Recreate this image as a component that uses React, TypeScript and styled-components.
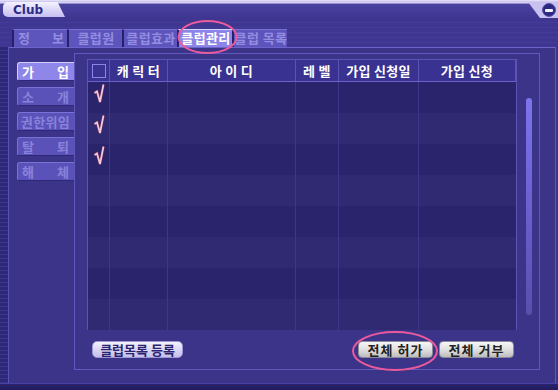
import styled, { createGlobalStyle } from "styled-components";

const GlobalStyle = createGlobalStyle`
	html, body {
		margin: 0;
		padding: 0;
		background: #3c3489;
	}
	* {
		box-sizing: border-box;
	}
`;

const KR = `"Noto Sans CJK KR", "Noto Sans", sans-serif`;

const Window = styled.div`
	position: relative;
	width: 558px;
	height: 390px;
	display: flex;
	flex-direction: column;
	background: #3c3489;
	font-family: ${KR};
	overflow: hidden;
`;

const TitleBar = styled.div`
	position: relative;
	height: 18px;
	display: flex;
	align-items: flex-start;
	justify-content: space-between;
	background: linear-gradient(
		180deg,
		#e8e4fa 0px,
		#c8c0ee 2px,
		#e4e0f8 3px,
		#4a42a0 4px,
		#3e3690 18px
	);
`;

const TitleTab = styled.div`
	margin: 2px 0 0 3px;
	width: 62px;
	height: 15px;
	padding-left: 10px;
	display: flex;
	align-items: center;
	background: linear-gradient(180deg, #f4f2fe, #c6bef0);
	border-radius: 5px 0 0 5px;
	clip-path: polygon(0 0, 88% 0, 100% 100%, 0 100%);
	font-family: "DejaVu Sans", sans-serif;
	font-weight: bold;
	font-size: 12px;
	color: #2e2a86;
`;

const CloseNotch = styled.div`
	margin-top: 2px;
	width: 30px;
	height: 16px;
	display: flex;
	align-items: center;
	justify-content: flex-end;
	padding-right: 2px;
	background: #c8c0ee;
	clip-path: polygon(0 0, 100% 0, 100% 100%, 40% 100%);
`;

const CloseButton = styled.div`
	width: 14px;
	height: 14px;
	border-radius: 50%;
	background: #2c2880;
	border: 1px solid #5a54b0;
	display: flex;
	align-items: center;
	justify-content: center;
	&::after {
		content: "";
		width: 8px;
		height: 3px;
		border-radius: 1px;
		background: #f2f0ff;
	}
`;

const TabBar = styled.div`
	height: 29px;
	padding: 11px 0 0 12px;
	display: flex;
	background: repeating-linear-gradient(
		180deg,
		#3e3690 0px,
		#3e3690 4px,
		#4a42a2 5px
	);
`;

const Tab = styled.div<{ $active?: boolean; $spread: boolean }>`
	width: 55px;
	height: 18px;
	border-left: 2px solid #27216c;
	border-top: 1px solid ${(p) => (p.$active ? "#d8d2ff" : "#7870d0")};
	background: ${(p) => (p.$active ? "#8c84e8" : "#5d55bb")};
	color: ${(p) => (p.$active ? "#ffffff" : "#948de2")};
	font-size: 13px;
	font-weight: bold;
	line-height: 16px;
	display: flex;
	justify-content: ${(p) => (p.$spread ? "space-between" : "center")};
	padding: 0 3px 0 4px;
	white-space: nowrap;
	letter-spacing: ${(p) => (p.$spread ? "0" : "0.4px")};
`;

const Frame = styled.div`
	flex: 1;
	display: flex;
`;

const Ruler = styled.div`
	width: 9px;
	background: repeating-linear-gradient(
		180deg,
		#2e2878 0px,
		#2e2878 3px,
		#4c44a4 4px
	);
	border-right: 1px solid #5a52b4;
`;

const FrameBody = styled.div`
	flex: 1;
	margin-right: 2px;
	display: flex;
	border-top: 1px solid #6c64c8;
	border-right: 1px solid #6058bc;
	background: #3c3489;
`;

const SideMenu = styled.div`
	width: 65px;
	padding: 14px 0 0 8px;
	display: flex;
	flex-direction: column;
	gap: 6px;
`;

const SideButton = styled.div<{ $active?: boolean; $spread: boolean }>`
	width: 57px;
	height: 19px;
	border-radius: 3px 0 0 3px;
	border-top: 1px solid ${(p) => (p.$active ? "#d4ceff" : "#7a72d4")};
	border-left: 1px solid ${(p) => (p.$active ? "#d4ceff" : "#7a72d4")};
	border-bottom: 1px solid #2e2878;
	background: ${(p) => (p.$active ? "#8e86e8" : "#5a52b8")};
	color: ${(p) => (p.$active ? "#ffffff" : "#8a82da")};
	font-size: 13px;
	font-weight: bold;
	line-height: 17px;
	display: flex;
	justify-content: ${(p) => (p.$spread ? "space-between" : "center")};
	padding: 0 5px 0 4px;
	white-space: nowrap;
	letter-spacing: ${(p) => (p.$spread ? "0" : "0.4px")};
`;

const Panel = styled.div`
	margin-top: 5px;
	width: 466px;
	height: 317px;
	border: 1px solid #6058bc;
	padding: 5px 0 0 12px;
	display: flex;
	flex-direction: column;
`;

const TableRow = styled.div`
	display: flex;
`;

const Table = styled.div`
	width: 430px;
	height: 271px;
	border: 1px solid #5c54b4;
	display: grid;
	grid-template-columns: 22px 58px 128px 43px 80px 97px;
	grid-template-rows: 22px repeat(8, 31px);
`;

const HeadCell = styled.div`
	background: #3a3290;
	border-bottom: 1px solid #6a62c8;
	border-right: 1px solid #5c54b4;
	color: #ffffff;
	font-size: 13px;
	font-weight: bold;
	display: flex;
	align-items: center;
	justify-content: center;
	letter-spacing: 0.3px;
	white-space: nowrap;
	&:last-child {
		border-right: none;
	}
`;

const CheckBox = styled.div`
	width: 14px;
	height: 14px;
	border: 1px solid #8c84e8;
`;

const Cell = styled.div<{ $odd: boolean; $last?: boolean }>`
	background: ${(p) => (p.$odd ? "#29246c" : "#302a72")};
	border-right: ${(p) => (p.$last ? "none" : "1px solid #3e3788")};
	display: flex;
	align-items: center;
	justify-content: center;
`;

const CheckIcon = styled.svg`
	margin-top: -7px;
	margin-left: 2px;
`;

const ScrollTrack = styled.div`
	width: 22px;
	padding: 39px 0 0 9px;
`;

const ScrollThumb = styled.div`
	width: 6px;
	height: 217px;
	border-radius: 3px;
	background: linear-gradient(180deg, #7c74ec 0%, #6a60d0 50%, #5a4eac 100%);
`;

const Footer = styled.div`
	margin-top: 11px;
	width: 430px;
	display: flex;
	align-items: center;
	padding: 0 3px 0 5px;
`;

const ListButton = styled.div`
	width: 91px;
	height: 17px;
	border-radius: 5px;
	background: linear-gradient(180deg, #f4f2fe 0%, #d6d2f2 60%, #c6c0ea 100%);
	border: 1px solid #9c96d8;
	color: #2a2470;
	font-size: 13px;
	font-weight: bold;
	line-height: 15px;
	text-align: center;
	white-space: nowrap;
`;

const Spacer = styled.div`
	flex: 1;
`;

const GrayButton = styled.div`
	width: 75px;
	height: 17px;
	margin-left: 6px;
	border-radius: 4px;
	background: linear-gradient(180deg, #f6f6f6 0%, #dedede 55%, #bcbcbc 100%);
	border: 1px solid #8a8a9a;
	color: #222222;
	font-size: 13px;
	font-weight: bold;
	line-height: 15px;
	text-align: center;
	letter-spacing: 1px;
	white-space: nowrap;
`;

const BottomBand = styled.div`
	height: 7px;
	background: linear-gradient(180deg, #2a2470, #211c5c);
	border-top: 1px solid #4a42a0;
`;

const Marks = styled.svg`
	position: absolute;
	left: 0;
	top: 0;
	pointer-events: none;
`;

const tabs = [
	{ label: ["정", "보"] },
	{ label: ["클럽원"] },
	{ label: ["클럽효과"] },
	{ label: ["클럽관리"], active: true },
	{ label: ["클럽 목록"] },
];

const sideItems = [
	{ label: ["가", "입"], active: true },
	{ label: ["소", "개"] },
	{ label: ["권한위임"] },
	{ label: ["탈", "퇴"] },
	{ label: ["해", "체"] },
];

const headers = ["캐 릭 터", "아 이 디", "레  벨", "가입 신청일", "가입 신청"];

const checkedRows = [0, 1, 2];

function Check() {
	return (
		<CheckIcon width="14" height="24" viewBox="0 0 14 24">
			<polyline
				points="1.5,11 4,9.5 7,20 10.5,2.5"
				fill="none"
				stroke="#5a2a58"
				strokeWidth="3.2"
				strokeLinejoin="miter"
			/>
			<polyline
				points="1.5,11 4,9.5 7,20 10.5,2.5"
				fill="none"
				stroke="#f4c6de"
				strokeWidth="1.8"
				strokeLinejoin="miter"
			/>
		</CheckIcon>
	);
}

function App() {
	const rows = Array.from({ length: 8 }, (_, i) => i);

	return (
		<Window>
			<GlobalStyle />
			<TitleBar>
				<TitleTab>Club</TitleTab>
				<CloseNotch>
					<CloseButton />
				</CloseNotch>
			</TitleBar>
			<TabBar>
				{tabs.map((t, i) => (
					<Tab key={i} $active={t.active} $spread={t.label.length > 1}>
						{t.label.map((c) => (
							<span key={c}>{c}</span>
						))}
					</Tab>
				))}
			</TabBar>
			<Frame>
				<Ruler />
				<FrameBody>
					<SideMenu>
						{sideItems.map((s, i) => (
							<SideButton key={i} $active={s.active} $spread={s.label.length > 1}>
								{s.label.map((c) => (
									<span key={c}>{c}</span>
								))}
							</SideButton>
						))}
					</SideMenu>
					<Panel>
						<TableRow>
							<Table>
								<HeadCell>
									<CheckBox />
								</HeadCell>
								{headers.map((h) => (
									<HeadCell key={h}>{h}</HeadCell>
								))}
								{rows.map((r) =>
									Array.from({ length: 6 }, (_, c) => (
										<Cell key={`${r}-${c}`} $odd={r % 2 === 0} $last={c === 5}>
											{c === 0 && checkedRows.includes(r) && <Check />}
										</Cell>
									))
								)}
							</Table>
							<ScrollTrack>
								<ScrollThumb />
							</ScrollTrack>
						</TableRow>
						<Footer>
							<ListButton>클럽목록 등록</ListButton>
							<Spacer />
							<GrayButton>전체 허가</GrayButton>
							<GrayButton>전체 거부</GrayButton>
						</Footer>
					</Panel>
				</FrameBody>
			</Frame>
			<BottomBand />
			<Marks width="558" height="390">
				<ellipse cx="207.5" cy="37" rx="29" ry="16" fill="none" stroke="#ec5a9c" strokeWidth="2" />
				<ellipse cx="395" cy="351" rx="42" ry="19" fill="none" stroke="#ec5a9c" strokeWidth="2" />
			</Marks>
		</Window>
	);
}

export default App;
